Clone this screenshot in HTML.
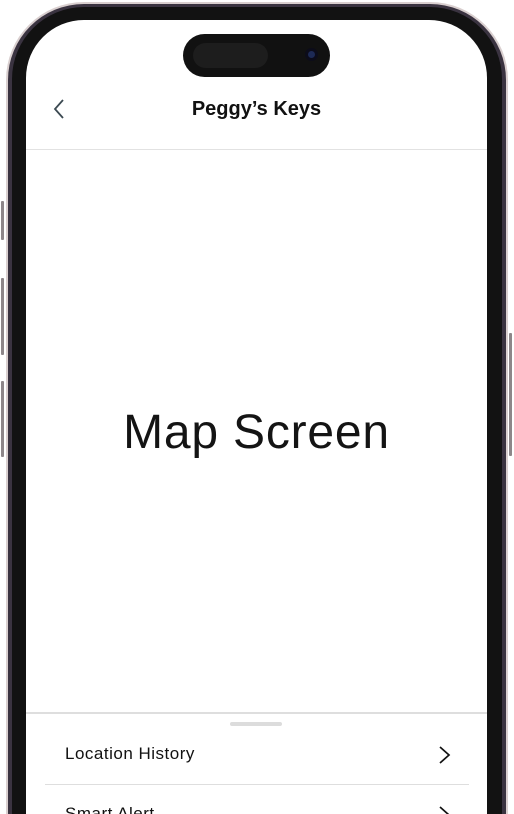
<!DOCTYPE html>
<html><head><style>
html,body{margin:0;padding:0;width:514px;height:814px;overflow:hidden;background:#fff;font-family:"Liberation Sans",sans-serif}
#w{position:relative;width:514px;height:814px;overflow:hidden}
.btn{position:absolute;width:3px;background:#8d8689;border-radius:1px}
.f1{position:absolute;left:6px;top:2px;width:502px;height:900px;border-radius:78px;background:#d9cfcf}
.f2{position:absolute;left:8px;top:4px;width:498px;height:900px;border-radius:76px;background:#3a3340}
.f3{position:absolute;left:12px;top:7px;width:490px;height:900px;border-radius:72px;background:#121212}
.scr{position:absolute;left:26px;top:20px;width:461px;height:900px;border-radius:58px;background:#fff;overflow:hidden}
</style></head><body><div id="w">
<div class="btn" style="left:1px;top:201px;height:39px"></div>
<div class="btn" style="left:1px;top:278px;height:77px"></div>
<div class="btn" style="left:1px;top:381px;height:76px"></div>
<div class="btn" style="left:509px;top:333px;height:123px"></div>
<div class="f1"></div><div class="f2"></div><div class="f3"></div>
<div class="scr">
  <div style="position:absolute;left:157px;top:14px;width:147px;height:43px;border-radius:22px;background:#111"></div>
  <div style="position:absolute;left:167px;top:23px;width:75px;height:25px;border-radius:13px;background:#1d1d1d"></div>
  <div style="position:absolute;left:279px;top:28px;width:13px;height:13px;border-radius:50%;background:#0c0c1a"></div>
  <div style="position:absolute;left:282px;top:31px;width:7px;height:7px;border-radius:50%;background:#1d2a55"></div>
  <svg style="position:absolute;left:26px;top:78px" width="14" height="22"><path d="M11 2 L3 11 L11 20" stroke="#3c4a52" stroke-width="1.8" fill="none"/></svg>
  <div style="position:absolute;left:0;width:461px;top:78px;text-align:center;font-weight:bold;font-size:20px;color:#111">Peggy’s Keys</div>
  <div style="position:absolute;left:0;width:461px;top:129px;height:1px;background:#e2e2e2"></div>
  <div style="position:absolute;left:0;width:461px;top:385px;text-align:center;font-size:48px;color:#141414;letter-spacing:0.8px">Map Screen</div>
  <div style="position:absolute;left:0;width:461px;top:692px;height:2px;background:#dedede"></div>
  <div style="position:absolute;left:204px;top:702px;width:52px;height:4px;border-radius:2px;background:#dcdcdc"></div>
  <div style="position:absolute;left:39px;top:724px;font-size:17px;letter-spacing:0.5px;color:#111">Location History</div>
  <svg style="position:absolute;left:412px;top:725px" width="14" height="20"><path d="M2 2 L11 10 L2 18" stroke="#111" stroke-width="1.7" fill="none"/></svg>
  <div style="position:absolute;left:19px;width:424px;top:764px;height:1px;background:#dedede"></div>
  <div style="position:absolute;left:39px;top:784px;font-size:17px;letter-spacing:0.5px;color:#111">Smart Alert</div>
  <svg style="position:absolute;left:412px;top:785px" width="14" height="20"><path d="M2 2 L11 10 L2 18" stroke="#111" stroke-width="1.7" fill="none"/></svg>
</div>
</div></body></html>
